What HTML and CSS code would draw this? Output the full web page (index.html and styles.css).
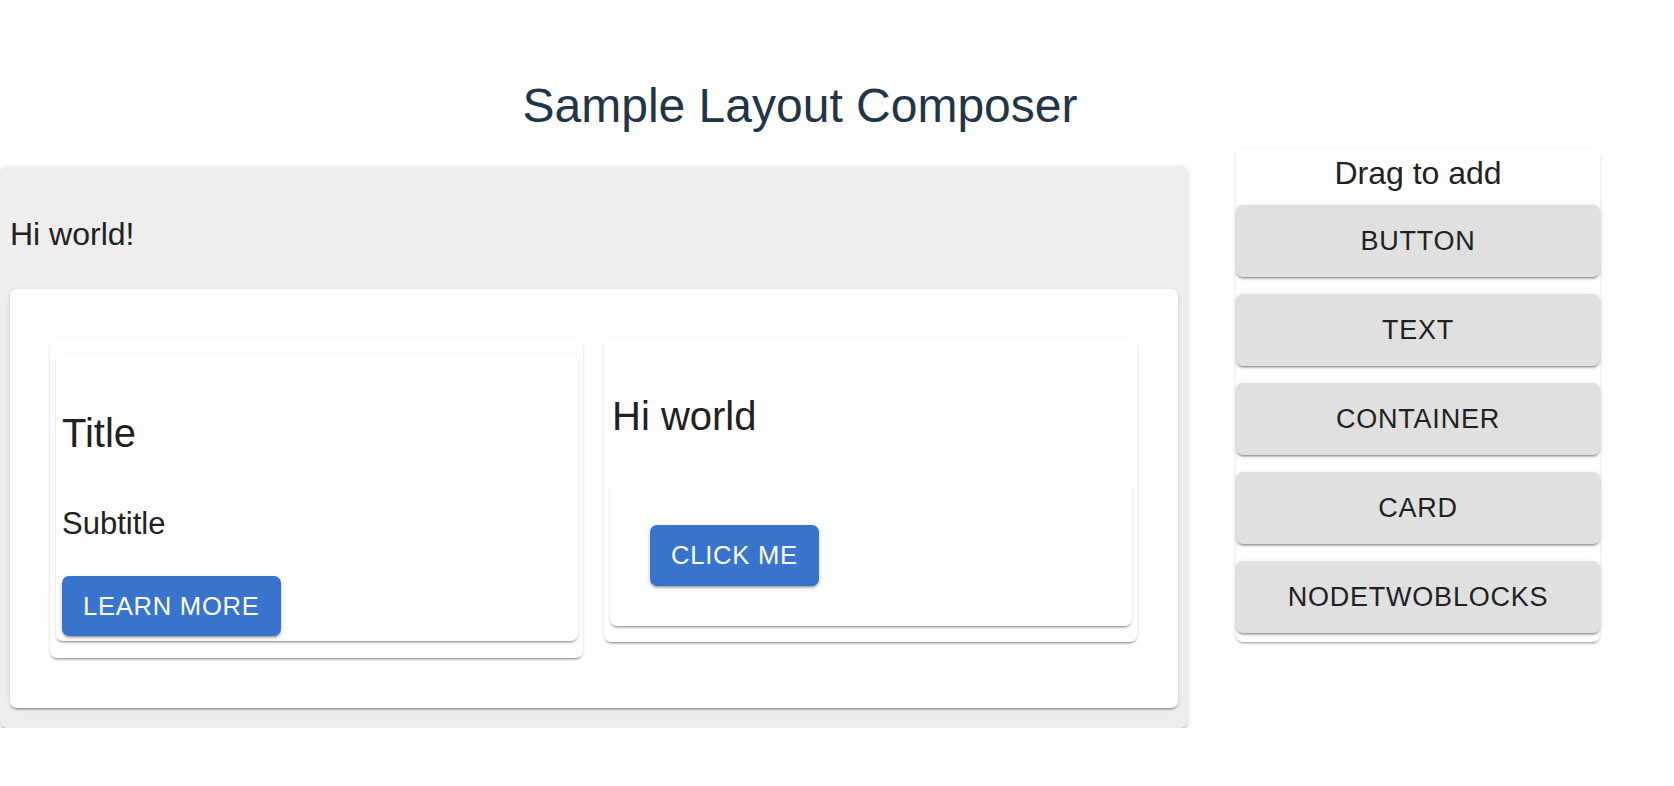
FILE: index.html
```html
<!DOCTYPE html>
<html lang="en">
<head>
<meta charset="utf-8">
<title>Sample Layout Composer</title>
<link rel="stylesheet" href="styles.css">
</head>
<body>
<div class="app">
  <h1 class="page-title">Sample Layout Composer</h1>
  <div class="workspace">
    <div class="canvas">
      <p class="canvas-text">Hi world!</p>
      <div class="container">
        <div class="card-row">
          <div class="card card-left">
            <div class="card inner-card">
              <p class="card-title title-first">Title</p>
              <p class="card-subtitle">Subtitle</p>
              <button class="btn" type="button">LEARN MORE</button>
            </div>
          </div>
          <div class="card card-right">
            <p class="card-title title-right">Hi world</p>
            <div class="card inner-box">
              <button class="btn" type="button">CLICK ME</button>
            </div>
          </div>
        </div>
      </div>
    </div>
    <aside class="toolbox">
      <div class="toolbox-title">Drag to add</div>
      <div class="tool">BUTTON</div>
      <div class="tool">TEXT</div>
      <div class="tool">CONTAINER</div>
      <div class="tool">CARD</div>
      <div class="tool">NODETWOBLOCKS</div>
    </aside>
  </div>
</div>
</body>
</html>
```
FILE: styles.css
```css
* { box-sizing: border-box; }

body {
  margin: 0;
  background: #ffffff;
  font-family: "Liberation Sans", Arial, Helvetica, sans-serif;
  color: #212121;
}

.app {
  width: 1600px;
}

.page-title {
  margin: 0;
  padding-top: 78px;
  font-size: 48px;
  line-height: 56px;
  font-weight: 400;
  text-align: center;
  color: #243447;
}

.workspace {
  display: flex;
  align-items: flex-start;
  margin-top: 15px;
}

.canvas {
  width: 1188px;
  margin-top: 17px;
  padding: 44px 10px 20px;
  background: #eeeeee;
  border-radius: 7px;
  box-shadow: 0 3px 2px -2px rgba(0, 0, 0, 0.25), 0 2px 2px 0 rgba(0, 0, 0, 0.12), 0 1px 5px 0 rgba(0, 0, 0, 0.1);
}

.canvas-text {
  margin: 0 0 31px;
  font-size: 32px;
  line-height: 48px;
}

.container {
  background: #ffffff;
  border-radius: 7px;
  padding: 50px 41px 50px 40px;
  box-shadow: 0 3px 2px -2px rgba(0, 0, 0, 0.3), 0 2px 2px 0 rgba(0, 0, 0, 0.12), 0 1px 5px 0 rgba(0, 0, 0, 0.1);
}

.card-row {
  display: flex;
  align-items: flex-start;
  gap: 21px;
}

.card {
  display: flex;
  flex-direction: column;
  align-items: flex-start;
  background: #ffffff;
  border-radius: 7px;
  box-shadow: 0 3px 2px -2px rgba(0, 0, 0, 0.3), 0 2px 2px 0 rgba(0, 0, 0, 0.12), 0 1px 4px 0 rgba(0, 0, 0, 0.08);
}

.card-left,
.card-right {
  flex: 1;
}

.card-left {
  padding: 15px 5px 17px 6px;
  align-items: stretch;
}

.inner-card {
  padding: 0 6px 5px 6px;
}

.card-title {
  margin: 0;
  font-size: 40px;
  line-height: 48px;
}

.title-first {
  margin-top: 55px;
}

.card-subtitle {
  margin: 44px 0 28px;
  font-size: 31px;
  line-height: 46.5px;
}

.card-right {
  padding: 0 5px 16px 6px;
  align-items: stretch;
}

.title-right {
  margin-top: 53px;
  padding-left: 2px;
}

.inner-box {
  margin-top: 44px;
  padding: 41px 40px 40px;
}

.btn {
  display: inline-block;
  border: none;
  border-radius: 7px;
  background: #3874cb;
  color: #ffffff;
  font-family: inherit;
  font-size: 25.6px;
  line-height: 44.8px;
  letter-spacing: 0.02857em;
  padding: 8px 21px;
  box-shadow: 0 3px 2px -2px rgba(0, 0, 0, 0.25), 0 2px 3px 0 rgba(0, 0, 0, 0.16), 0 1px 6px 0 rgba(0, 0, 0, 0.1);
  cursor: pointer;
}

.toolbox {
  width: 364px;
  margin-left: 48px;
  padding-bottom: 9px;
  background: #ffffff;
  border-radius: 7px;
  display: flex;
  flex-direction: column;
  gap: 17px;
  box-shadow: 0 3px 2px -2px rgba(0, 0, 0, 0.25), 0 2px 2px 0 rgba(0, 0, 0, 0.1), 0 1px 5px 0 rgba(0, 0, 0, 0.08);
}

.toolbox-title {
  font-size: 32px;
  line-height: 48px;
  text-align: center;
  margin-bottom: -9px;
}

.tool {
  height: 72px;
  display: flex;
  align-items: center;
  justify-content: center;
  background: #e0e0e0;
  border-radius: 7px;
  font-size: 27px;
  letter-spacing: 0.02857em;
  box-shadow: 0 3px 2px -2px rgba(0, 0, 0, 0.3), 0 2px 2px 0 rgba(0, 0, 0, 0.14), 0 1px 5px 0 rgba(0, 0, 0, 0.12);
}
```
